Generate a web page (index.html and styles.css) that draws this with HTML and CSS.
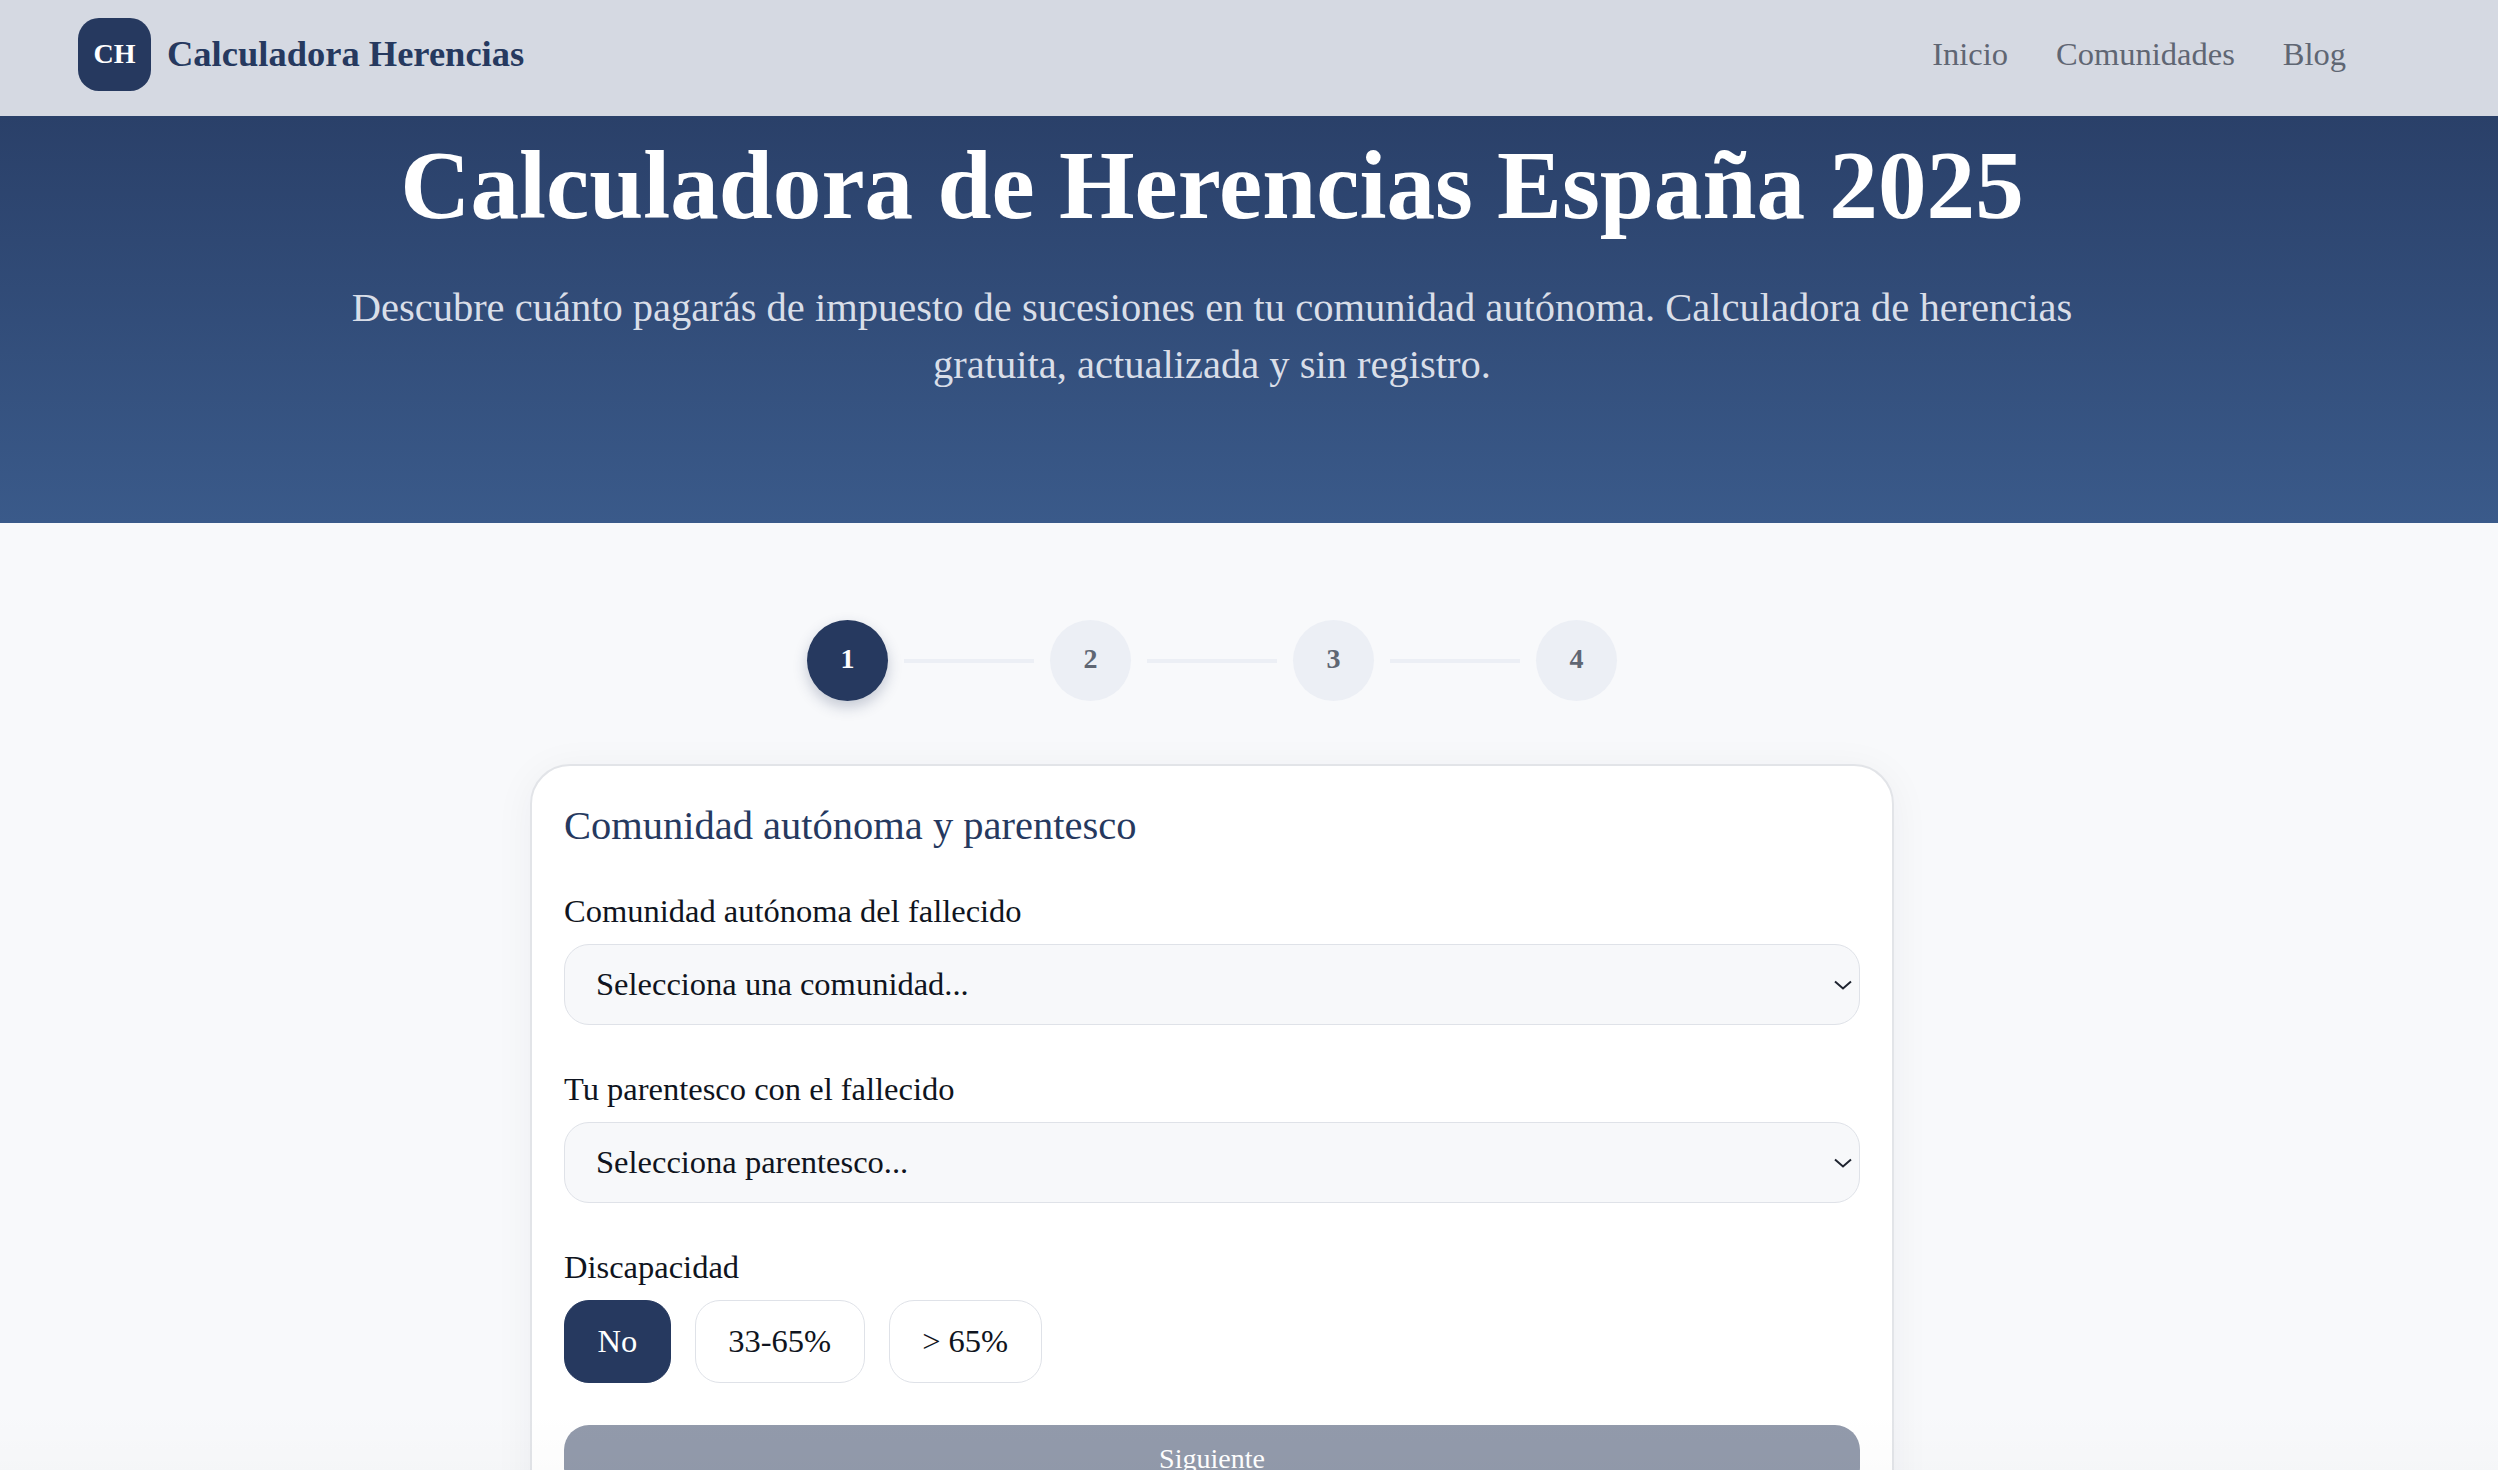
FILE: index.html
```html
<!DOCTYPE html>
<html lang="es">
<head>
<meta charset="utf-8">
<title>Calculadora Herencias</title>
<link rel="stylesheet" href="styles.css">
</head>
<body>
<header class="topbar">
  <div class="topbar-inner">
    <a class="brand" href="#"><span class="brand-mark">CH</span><span class="brand-name">Calculadora Herencias</span></a>
    <nav class="nav"><a href="#">Inicio</a><a href="#">Comunidades</a><a href="#">Blog</a></nav>
  </div>
</header>
<section class="hero">
  <div class="hero-inner">
    <h1>Calculadora de Herencias España 2025</h1>
    <p>Descubre cuánto pagarás de impuesto de sucesiones en tu comunidad autónoma. Calculadora de herencias gratuita, actualizada y sin registro.</p>
  </div>
</section>
<main class="main">
  <div class="steps">
    <span class="step active">1</span><span class="line"></span>
    <span class="step">2</span><span class="line"></span>
    <span class="step">3</span><span class="line"></span>
    <span class="step">4</span>
  </div>
  <section class="card">
    <h2>Comunidad autónoma y parentesco</h2>
    <div class="field">
      <label>Comunidad autónoma del fallecido</label>
      <div class="select"><span>Selecciona una comunidad...</span><svg class="chev" viewBox="0 0 18 10"><path d="M1 1.5l8 7 8-7" fill="none" stroke="#1f2430" stroke-width="2"/></svg></div>
    </div>
    <div class="field">
      <label>Tu parentesco con el fallecido</label>
      <div class="select"><span>Selecciona parentesco...</span><svg class="chev" viewBox="0 0 18 10"><path d="M1 1.5l8 7 8-7" fill="none" stroke="#1f2430" stroke-width="2"/></svg></div>
    </div>
    <div class="field">
      <label>Discapacidad</label>
      <div class="options"><button class="opt on">No</button><button class="opt">33-65%</button><button class="opt">&gt; 65%</button></div>
    </div>
    <button class="next">Siguiente</button>
  </section>
</main>
</body>
</html>
```
FILE: styles.css
```css
* { box-sizing: border-box; }
html, body { margin: 0; height: 1470px; overflow: hidden; }
body { position: relative; background: #f8f9fb; font-family: "Liberation Serif", "Times New Roman", serif; color: #0f1420; }
body::after { content: ""; position: absolute; left: 0; right: 0; bottom: 0; height: 60px; background: linear-gradient(180deg, rgba(0,0,0,0), rgba(0,0,0,.012)); pointer-events: none; }
a { text-decoration: none; color: inherit; }
.topbar { height: 116px; background: #d5d9e2; }
.topbar-inner { width: 2424px; height: 100%; padding: 0 78px 7px; display: flex; align-items: center; justify-content: space-between; }
.brand { display: flex; align-items: center; gap: 16px; }
.brand-mark { width: 73px; height: 73px; border-radius: 21px; background: #26395f; color: #fff; font-size: 28px; font-weight: 700; padding-bottom: 2px; display: flex; align-items: center; justify-content: center; }
.brand-name { font-size: 36.5px; font-weight: 700; color: #26395f; padding-bottom: 3px; }
.nav { display: flex; gap: 48px; font-size: 32.5px; color: #5f6673; padding-bottom: 1px; }
.hero { height: 407px; background: linear-gradient(180deg, #2a4069, #3a5a8a); color: #fff; }
.hero-inner { width: 2424px; text-align: center; }
.hero h1 { margin: 0; font-size: 97.2px; line-height: 118px; padding-top: 10px; font-weight: 700; }
.hero p { margin: 35px auto 0; width: 1760px; font-size: 40.5px; line-height: 57px; color: #d9dee8; }
.main { width: 2424px; padding-top: 97px; display: flex; flex-direction: column; align-items: center; }
.steps { display: flex; align-items: center; gap: 16px; }
.step { width: 81px; height: 81px; border-radius: 50%; background: #eceff5; color: #5f6673; font-size: 28px; font-weight: 700; padding-bottom: 4px; display: flex; align-items: center; justify-content: center; }
.step.active { background: #26395f; color: #fff; box-shadow: 0 6px 14px rgba(38,57,95,.25); }
.line { width: 130px; height: 4px; background: #eceff5; }
.card { margin-top: 63px; width: 1364px; height: 800px; background: #fff; border: 2px solid #e2e4e8; border-radius: 40px; padding: 30px 32px; box-shadow: 0 6px 40px rgba(20,30,60,.05); }
.card h2 { margin: 0; font-size: 40.5px; line-height: 60px; font-weight: 400; color: #26395f; }
.field { margin-top: 36px; }
.field + .field { margin-top: 45px; }
.field label { display: block; font-size: 32.5px; line-height: 38px; margin-bottom: 14px; }
.select { height: 81px; border: 1.5px solid #dfe2e8; border-radius: 25px; background: #f7f8fa; display: flex; align-items: center; justify-content: space-between; padding: 0 7px 0 31px; font-size: 32.5px; }
.chev { width: 18px; height: 10px; }
.options { display: flex; gap: 24px; }
.opt { height: 83px; padding: 0 32.5px; border: 1.5px solid #dfe2e8; border-radius: 25px; background: #fff; font: inherit; font-size: 32.5px; color: #0f1420; }
.opt.on { background: #26395f; border-color: #26395f; color: #fff; }
.next { display: block; width: 100%; margin-top: 42px; height: 67px; border: 0; border-radius: 25px; background: #929aab; color: #fff; font: inherit; font-size: 28px; }
```
